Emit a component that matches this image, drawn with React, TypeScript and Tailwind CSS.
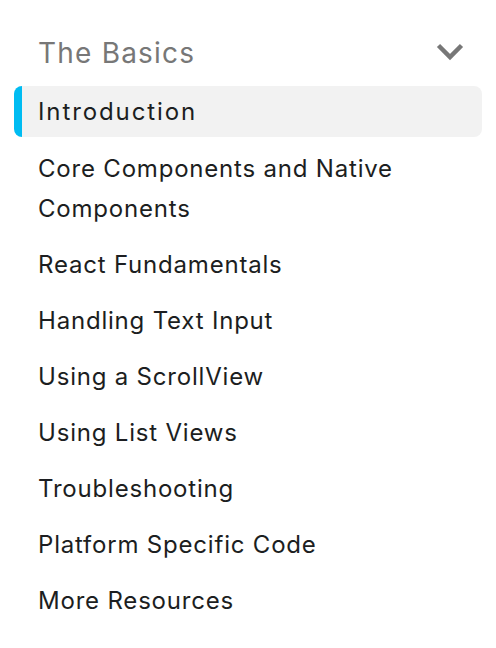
const items = [
  "Core Components and Native Components",
  "React Fundamentals",
  "Handling Text Input",
  "Using a ScrollView",
  "Using List Views",
  "Troubleshooting",
  "Platform Specific Code",
  "More Resources",
];

function ChevronDown() {
  return (
    <svg width="28" height="18" viewBox="0 0 28 18" fill="none">
      <polyline
        points="2.5,2.5 14,14 25.5,2.5"
        stroke="#777777"
        strokeWidth="4.5"
        strokeLinejoin="miter"
      />
    </svg>
  );
}

export default function App() {
  return (
    <div className="w-[496px] h-[648px] bg-white font-['Inter',sans-serif] overflow-hidden">
      <nav className="pt-[27px] pl-[14px] pr-[14px]">
        {/* Category header */}
        <div className="h-[50px] flex items-center justify-between pl-[24px] pr-[18px]">
          <span className="text-[28px] leading-[40px] tracking-[1.2px] text-[#777777] translate-y-[1px]">
            The Basics
          </span>
          <ChevronDown />
        </div>

        {/* Items */}
        <ul className="mt-[9px] flex flex-col gap-[5px]">
          <li className="rounded-lg bg-[#f2f2f2] border-l-[8px] border-[#00bcf2] pl-[16px] pr-4 pt-[6px] pb-[5px] text-[24px] leading-[40px] tracking-[1.9px] text-[#1c1e21]">
            Introduction
          </li>
          {items.map((item) => (
            <li
              key={item}
              className="pl-[24px] pr-[60px] pt-[7px] pb-[4px] text-[24px] leading-[40px] tracking-[0.8px] text-[#1c1e21]"
            >
              {item}
            </li>
          ))}
        </ul>
      </nav>
    </div>
  );
}
